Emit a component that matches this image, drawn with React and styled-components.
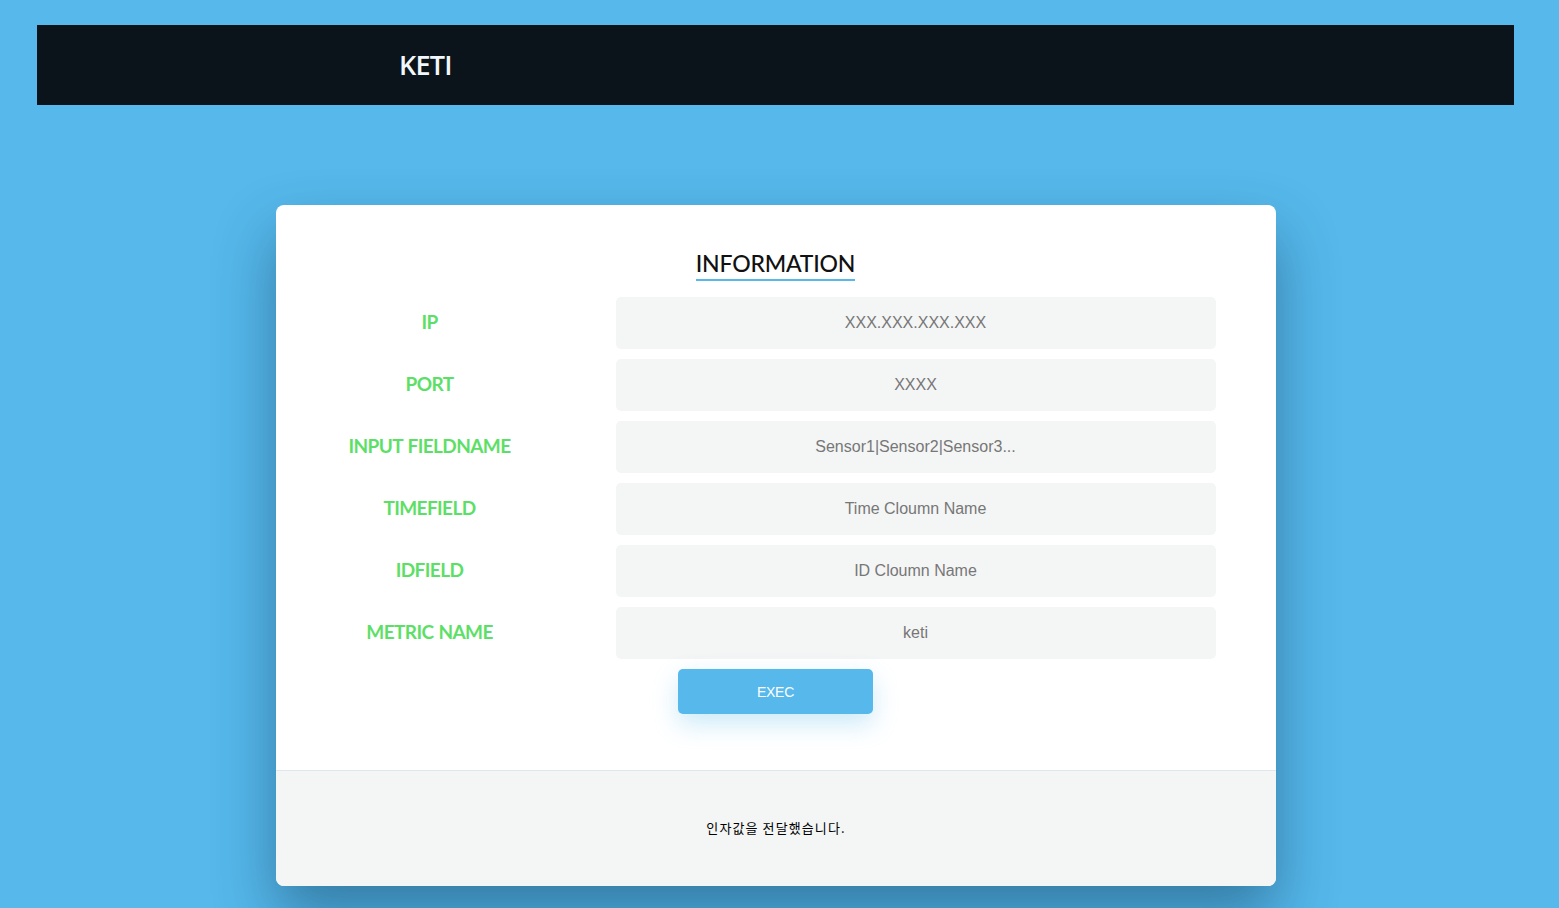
import React from 'react';
import styled, { createGlobalStyle } from 'styled-components';

const GlobalStyle = createGlobalStyle`
  html, body {
    margin: 0;
    padding: 0;
    background: #56b8eb;
    min-height: 100%;
  }
  body {
    font-family: "Liberation Sans", Arial, sans-serif;
  }
`;

const fields = [
  { label: 'IP', placeholder: 'XXX.XXX.XXX.XXX' },
  { label: 'PORT', placeholder: 'XXXX' },
  { label: 'INPUT FIELDNAME', placeholder: 'Sensor1|Sensor2|Sensor3...' },
  { label: 'TIMEFIELD', placeholder: 'Time Cloumn Name' },
  { label: 'IDFIELD', placeholder: 'ID Cloumn Name' },
  { label: 'METRIC NAME', placeholder: 'keti' },
];

function App() {
  return (
    <>
      <GlobalStyle />
      <Page>
        <Header>
          <Brand>KETI</Brand>
        </Header>

        <Card>
          <CardBody>
            <Title>INFORMATION</Title>
            <Form>
              {fields.map((f) => (
                <Row key={f.label}>
                  <Label>{f.label}</Label>
                  <Input placeholder={f.placeholder} />
                </Row>
              ))}
              <ButtonRow>
                <ExecButton type="button">EXEC</ExecButton>
              </ButtonRow>
            </Form>
          </CardBody>
          <CardFooter>
            <Message>인자값을 전달했습니다.</Message>
          </CardFooter>
        </Card>
      </Page>
    </>
  );
}

const Page = styled.div`
  width: calc(100% - 8px);
  min-height: 908px;
  box-sizing: border-box;
  padding-top: 25px;
  display: flex;
  flex-direction: column;
  align-items: center;
`;

const Header = styled.header`
  width: 1477px;
  height: 80px;
  background: #0a141a;
  display: flex;
  align-items: center;
  padding-left: 362px;
  box-sizing: border-box;
`;

const Brand = styled.h1`
  margin: 0 0 2px;
  color: #f2f7fb;
  font-family: "Open Sans", sans-serif;
  font-weight: 600;
  font-size: 27px;
  letter-spacing: -0.8px;
`;

const Card = styled.div`
  margin-top: 100px;
  width: 1000px;
  background: #fff;
  border-radius: 8px;
  overflow: hidden;
  box-shadow: 0 30px 60px rgba(10, 50, 80, 0.45);
`;

const CardBody = styled.div`
  padding: 44px 60px 56px;
  display: flex;
  flex-direction: column;
  align-items: center;
`;

const Title = styled.h2`
  margin: 0 0 16px;
  padding-bottom: 1px;
  font-family: "Lato", sans-serif;
  font-weight: 500;
  font-size: 23px;
  color: #111;
  border-bottom: 2px solid #56b8eb;
  line-height: 29px;
  letter-spacing: -0.2px;
`;

const Form = styled.div`
  width: 100%;
  display: flex;
  flex-direction: column;
  gap: 10px;
`;

const Row = styled.div`
  display: grid;
  grid-template-columns: 188px 1fr;
  column-gap: 92px;
  align-items: center;
`;

const Label = styled.span`
  text-align: center;
  color: #5ddf67;
  font-family: "Lato", sans-serif;
  font-weight: 700;
  font-size: 19px;
  letter-spacing: -0.6px;
  word-spacing: 1px;
  padding-bottom: 3px;
`;

const Input = styled.input`
  box-sizing: border-box;
  height: 52px;
  padding: 0;
  border: none;
  border-radius: 5px;
  background: #f4f5f5;
  text-align: center;
  font-family: "Liberation Sans", Arial, sans-serif;
  font-size: 16px;
  color: #333;
  outline: none;

  &::placeholder {
    color: #777;
  }
`;

const ButtonRow = styled.div`
  display: flex;
  justify-content: center;
`;

const ExecButton = styled.button`
  width: 195px;
  height: 45px;
  border: none;
  border-radius: 5px;
  background: #56b8eb;
  color: #fff;
  font-family: "Liberation Sans", Arial, sans-serif;
  font-size: 14px;
  letter-spacing: -0.3px;
  box-shadow: 0 10px 25px rgba(86, 184, 235, 0.3);
  cursor: pointer;
`;

const CardFooter = styled.div`
  height: 115px;
  border-top: 1px solid #dbe7f1;
  background: #f4f5f5;
  display: flex;
  align-items: center;
  justify-content: center;
`;

const Message = styled.p`
  margin: 0 0 2px 1px;
  font-family: "Noto Sans CJK KR", sans-serif;
  font-size: 13px;
  font-weight: 400;
  letter-spacing: 1.1px;
  color: #000;
`;

export default App;
